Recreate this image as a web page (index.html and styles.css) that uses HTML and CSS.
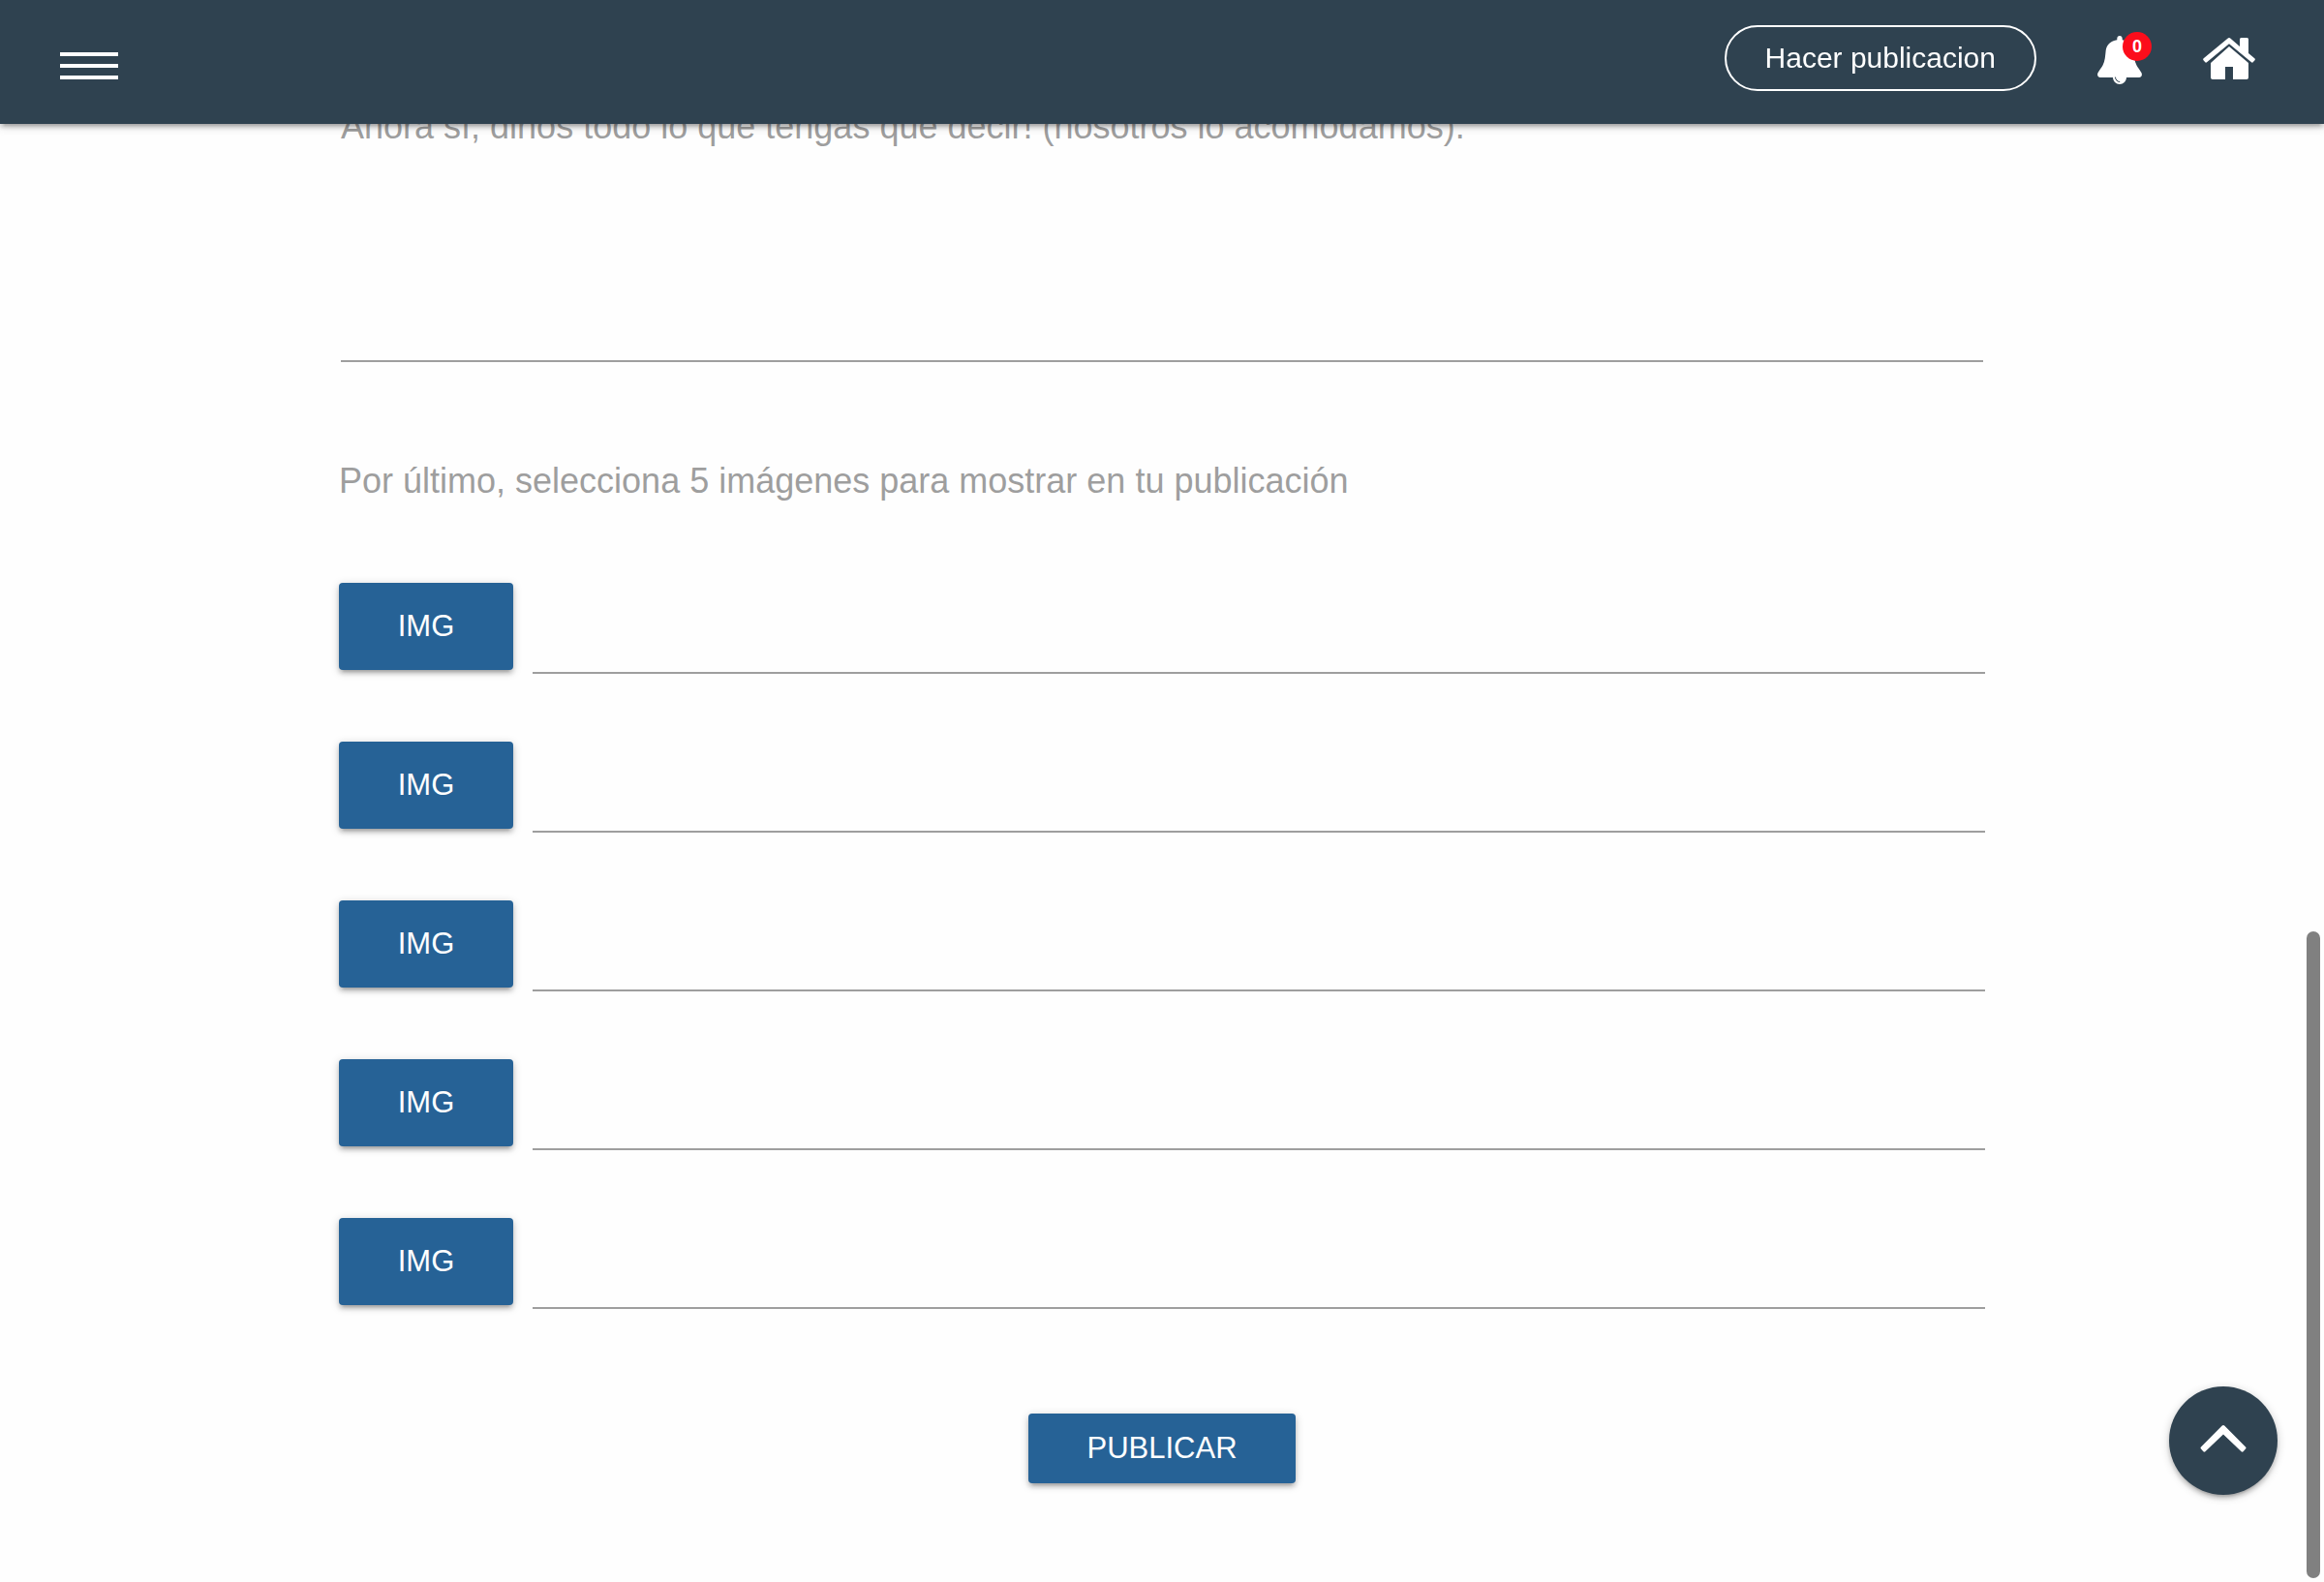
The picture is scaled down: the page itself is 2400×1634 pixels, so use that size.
FILE: index.html
```html
<!DOCTYPE html>
<html lang="es">
<head>
<meta charset="utf-8">
<meta name="viewport" content="width=device-width, initial-scale=1">
<title>Hacer publicacion</title>
<link rel="stylesheet" href="styles.css">
</head>
<body>
<header class="topbar">
  <button class="menu" type="button" aria-label="Menú">
    <span class="menu-bar"></span>
    <span class="menu-bar"></span>
    <span class="menu-bar"></span>
  </button>
  <nav class="actions">
    <a class="pill" href="#publicar">Hacer publicacion</a>
    <a class="bell" href="#avisos" aria-label="Notificaciones">
      <svg width="46" height="50" viewBox="0 0 46 50" aria-hidden="true">
        <path fill="#fff" d="M23 0c1.600 0 2.700 1.200 2.700 2.800v1.400C32 5.200 36.500 9 37.300 15c.6 5.500.8 11 3.200 15.500 1.500 2.800 3.500 5 4.900 7.500 1.200 2.400.2 5-2.400 5H30c-.2 4-3.200 7-7 7s-6.800-3-7-7H3c-2.600 0-3.600-2.600-2.400-5 1.400-2.500 3.400-4.700 4.900-7.500C7.900 26 8.100 20.500 8.700 15 9.500 9 14 5.200 20.300 4.200V2.800C20.300 1.200 21.400 0 23 0z"/>
        <path fill="none" stroke="#2f4250" stroke-width="1" stroke-linecap="round" d="M18.500 43c.2 2.500 1.900 4.300 4.300 4.500"/>
      </svg>
      <span class="badge">0</span>
    </a>
    <a class="home" href="#inicio" aria-label="Inicio">
      <svg width="54" height="43" viewBox="0 0 54 43" aria-hidden="true">
        <path fill="#fff" d="M25.500.7Q27-.6 28.500.7L38 9V1.500Q38 0 39.500 0h6Q47 0 47 1.500V16l6.300 5.300q1 .9.200 1.900l-1.600 1.900q-.9 1-1.900.1L27 6.300 4 25.200q-1 .9-1.900-.1L.5 23.200q-.8-1 .2-1.900z"/>
        <path fill="#fff" d="M27 9l20 17v15q0 2-2 2H31V30h-8v13H10q-2 0-2-2V26z"/>
      </svg>
    </a>
  </nav>
</header>

<main class="page">
  <form class="form">
    <div class="story">
      <label class="prompt" for="texto">Ahora sí, dinos todo lo que tengas que decir! (nosotros lo acomodamos).</label>
      <textarea class="story-text" id="texto"></textarea>
    </div>
    <fieldset class="images">
      <legend class="prompt">Por último, selecciona 5 imágenes para mostrar en tu publicación</legend>
      <div class="image-row"><button class="btn btn-file" type="button">IMG</button><input class="path" type="text" aria-label="Imagen 1"></div>
      <div class="image-row"><button class="btn btn-file" type="button">IMG</button><input class="path" type="text" aria-label="Imagen 2"></div>
      <div class="image-row"><button class="btn btn-file" type="button">IMG</button><input class="path" type="text" aria-label="Imagen 3"></div>
      <div class="image-row"><button class="btn btn-file" type="button">IMG</button><input class="path" type="text" aria-label="Imagen 4"></div>
      <div class="image-row"><button class="btn btn-file" type="button">IMG</button><input class="path" type="text" aria-label="Imagen 5"></div>
    </fieldset>
    <button class="btn btn-submit" id="publicar" type="submit">PUBLICAR</button>
  </form>
</main>

<button class="to-top" type="button" aria-label="Volver arriba">
  <svg width="48" height="28" viewBox="0 0 48 28" aria-hidden="true">
    <path fill="#fff" d="M22.800.6q1.200-1.100 2.400 0l21.800 22q1 1 0 2l-2.400 2.600q-1 .9-2 0L24 9.400 5.400 27.200q-1 .9-2 0L1 24.600q-1-1 0-2z"/>
  </svg>
</button>
<div class="scroll-thumb" aria-hidden="true"></div>
</body>
</html>
```
FILE: styles.css
```css
* {
  box-sizing: border-box;
}

body {
  margin: 0;
  min-height: 100vh;
  background: #fefefe;
  color: #9e9e9e;
  font-family: "Liberation Sans", Arial, sans-serif;
  font-size: 36px;
  line-height: 54px;
}

.topbar {
  position: fixed;
  top: 0;
  left: 0;
  right: 0;
  z-index: 10;
  display: flex;
  align-items: center;
  justify-content: space-between;
  height: 128px;
  padding: 0 71px 8px 62px;
  background: #2f4250;
  box-shadow: 0 4px 4px 0 rgba(0, 0, 0, 0.14), 0 6px 2px -4px rgba(0, 0, 0, 0.12), 0 2px 10px 0 rgba(0, 0, 0, 0.2);
}

.menu {
  display: flex;
  flex-direction: column;
  justify-content: flex-end;
  gap: 8px;
  width: 60px;
  height: 44px;
  padding: 0;
  border: 0;
  background: none;
}

.menu-bar {
  height: 4px;
  background: #fff;
}

.actions {
  display: flex;
  align-items: center;
  gap: 63px;
}

.pill {
  padding: 0 40px;
  border: 2px solid #fff;
  border-radius: 34px;
  color: #fff;
  font-size: 30px;
  line-height: 64px;
  text-decoration: none;
}

.bell {
  position: relative;
  display: flex;
  align-items: flex-end;
  height: 54px;
}

.badge {
  position: absolute;
  top: 0;
  right: -10px;
  width: 30px;
  border-radius: 50%;
  background: #fc0d1b;
  color: #fff;
  font-size: 18px;
  font-weight: bold;
  line-height: 30px;
  text-align: center;
}

.bell,
.home {
  text-decoration: none;
}

.home {
  display: flex;
}

.page {
  padding: 104px 24px 100px;
}

.form {
  display: flex;
  flex-direction: column;
  max-width: 1700px;
  margin: 0 auto;
}

.story {
  display: flex;
  flex-direction: column;
  padding: 0 2px;
}

.prompt {
  display: block;
  padding: 0;
}

.story-text {
  height: 216px;
  padding: 0;
  border: 0;
  border-bottom: 2px solid #9e9e9e;
  background: none;
  font: inherit;
  resize: none;
}

.images {
  display: flex;
  flex-direction: column;
  gap: 70px;
  min-width: 0;
  margin: 96px 0 108px;
  padding: 0;
  border: 0;
}

.images .prompt {
  margin-bottom: 78px;
}

.image-row {
  display: flex;
  align-items: flex-start;
  gap: 20px;
}

.path {
  flex: 1;
  min-width: 0;
  height: 94px;
  padding: 0;
  border: 0;
  border-bottom: 2px solid #9e9e9e;
  background: none;
  font: inherit;
}

.btn {
  padding: 0;
  border: 0;
  border-radius: 4px;
  background: #266296;
  box-shadow: 0 4px 4px 0 rgba(0, 0, 0, 0.14), 0 6px 2px -4px rgba(0, 0, 0, 0.12), 0 2px 10px 0 rgba(0, 0, 0, 0.2);
  color: #fff;
  font-family: inherit;
  font-size: 31px;
}

.btn-file {
  width: 180px;
  line-height: 90px;
}

.btn-submit {
  align-self: center;
  width: 276px;
  line-height: 72px;
}

.to-top {
  position: fixed;
  right: 48px;
  bottom: 90px;
  display: flex;
  align-items: center;
  justify-content: center;
  width: 112px;
  height: 112px;
  padding: 0 0 4px;
  border: 0;
  border-radius: 50%;
  background: #2f4250;
  box-shadow: 0 4px 4px 0 rgba(0, 0, 0, 0.14), 0 6px 2px -4px rgba(0, 0, 0, 0.12), 0 2px 10px 0 rgba(0, 0, 0, 0.2);
}

.scroll-thumb {
  position: fixed;
  right: 4px;
  bottom: 4px;
  width: 14px;
  height: 668px;
  border-radius: 7px;
  background: #808080;
}
```
